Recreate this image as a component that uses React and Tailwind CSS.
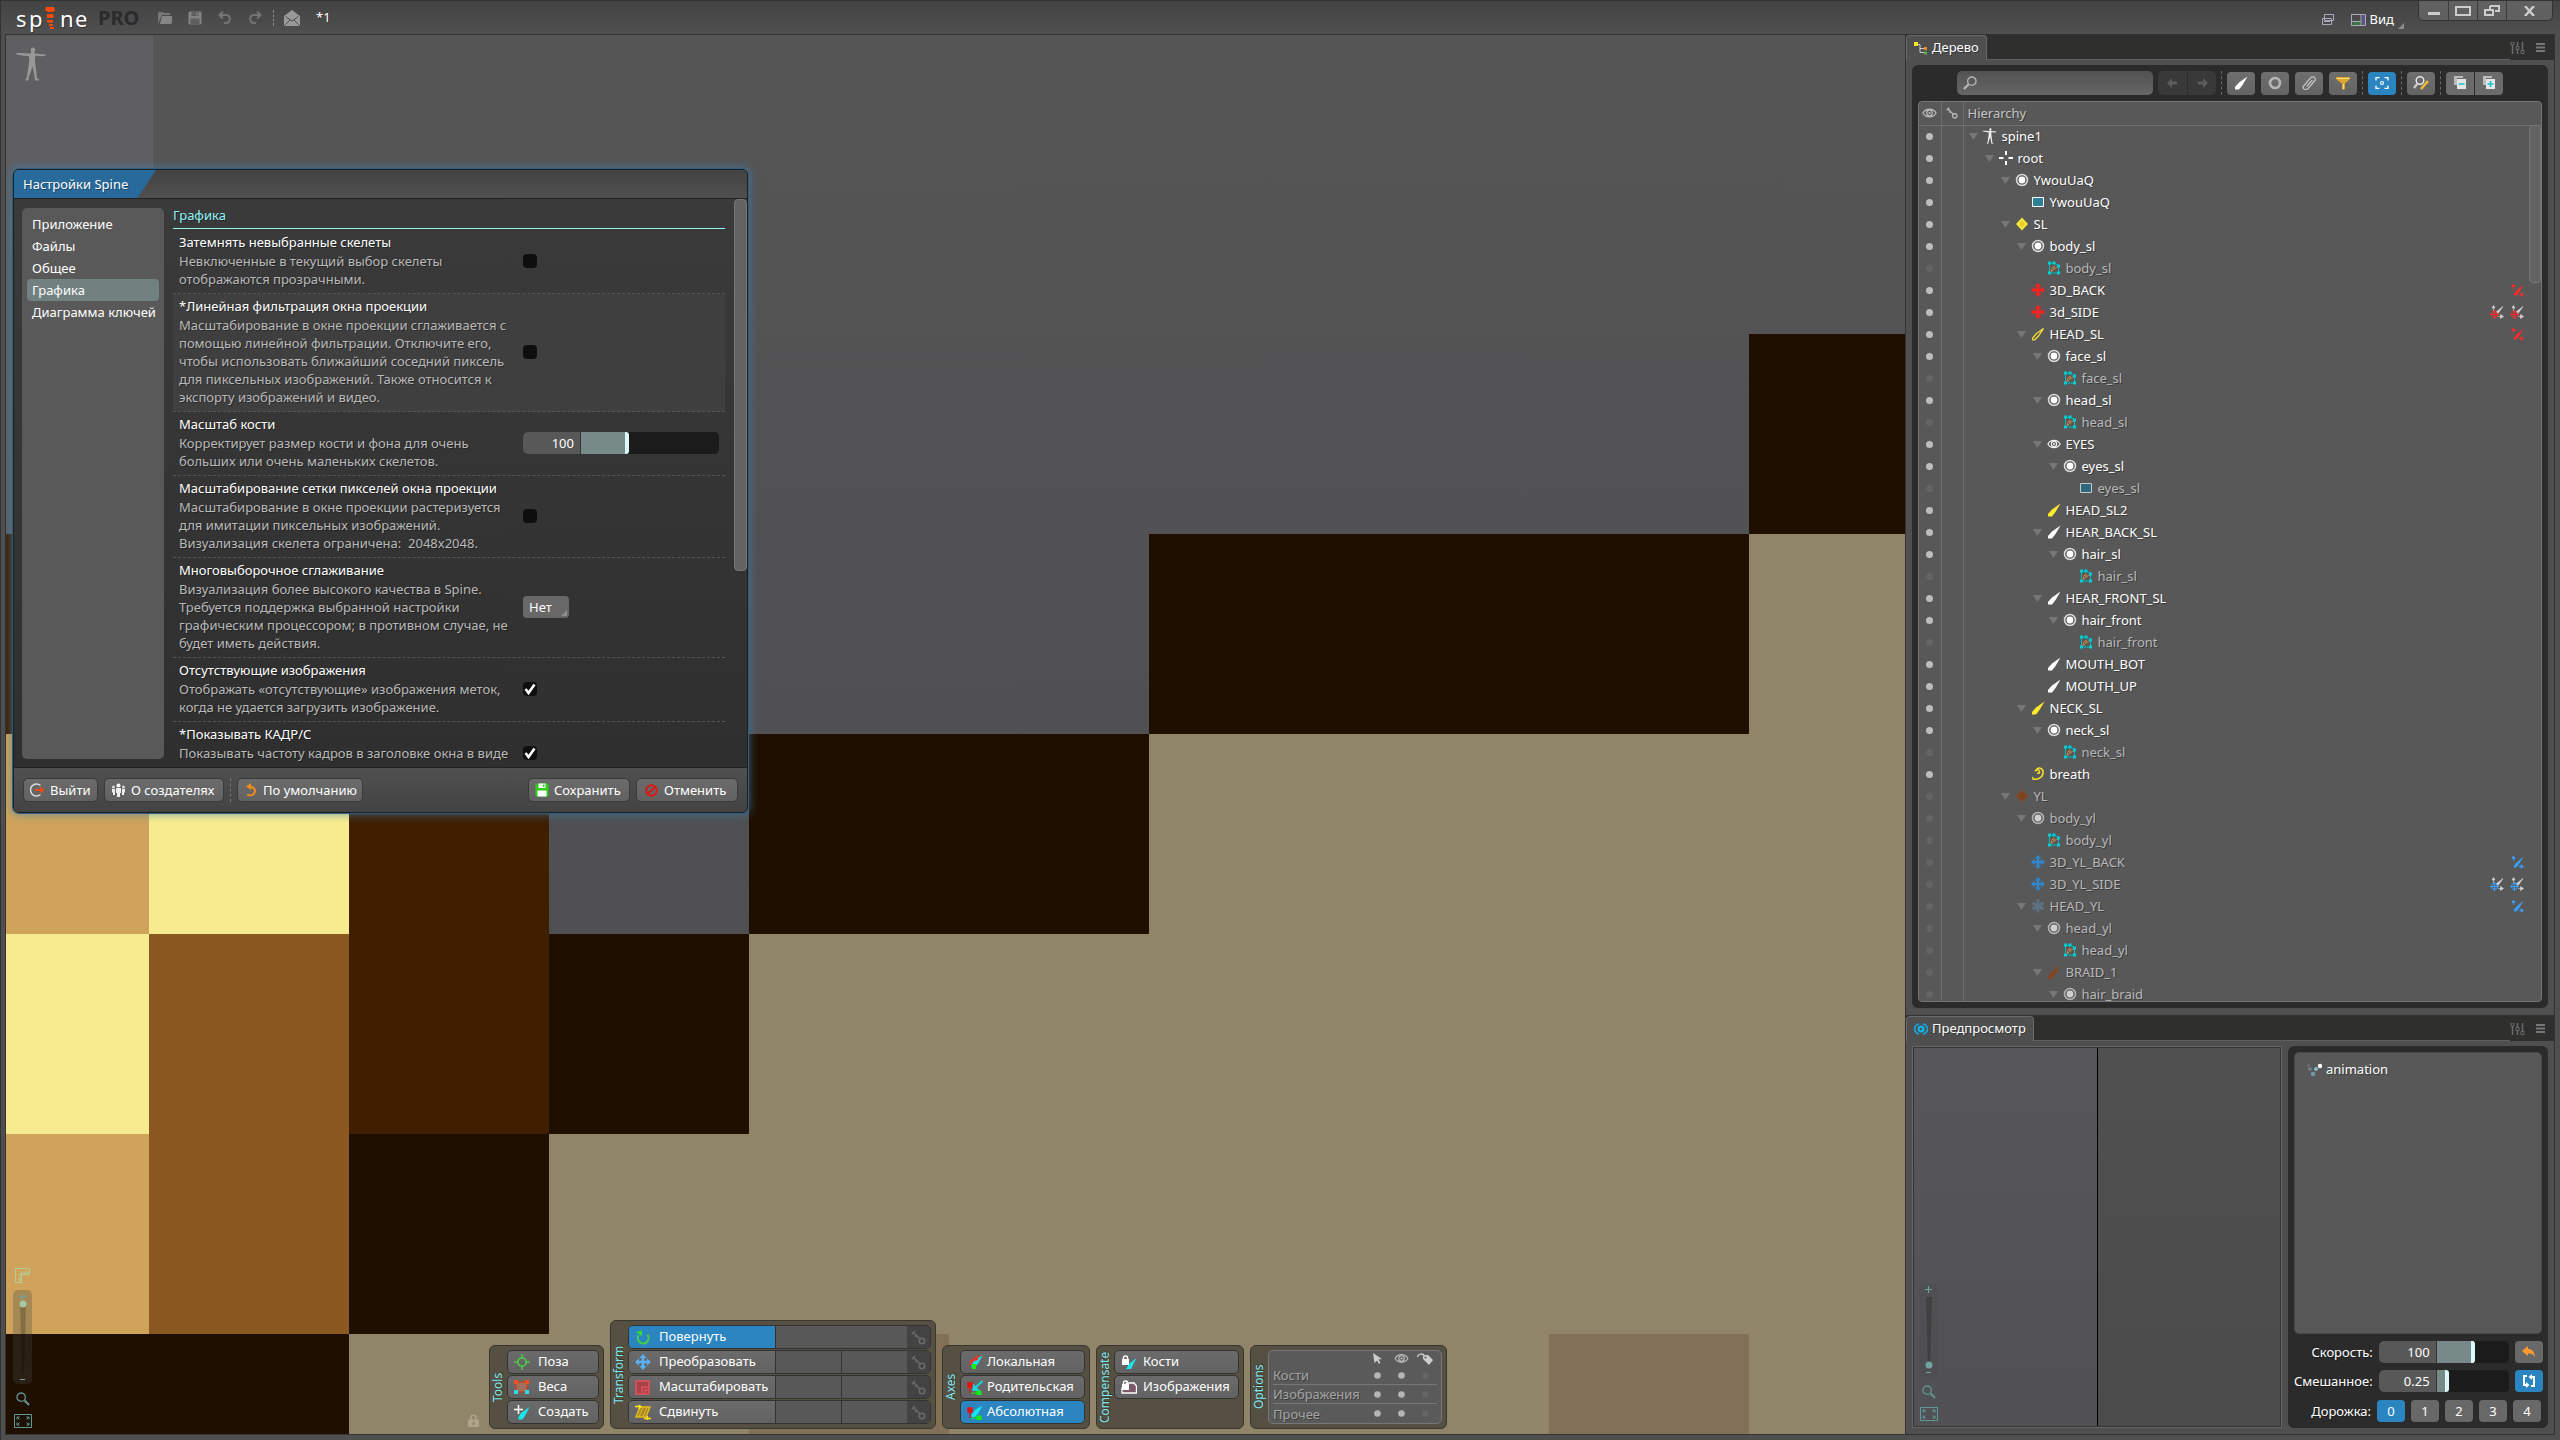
import { useState } from "react";

const GROUP_LABEL = "rotate-180 text-center text-xs leading-[14px] text-[#7fe6ee] [writing-mode:vertical-rl]";
const BTN = "border border-[#3a3a3a] rounded-[5px] bg-linear-to-b from-[#6b6b6b] to-[#626262]";
const TREE_BTN = "flex h-[23px] w-[28px] items-center justify-center rounded-[4px] bg-linear-to-b from-[#6f6f6f] to-[#636363]";

const ROWS = [
  { name: "spine1", depth: 0, icon: "skeleton", open: true },
  { name: "root", depth: 1, icon: "root", open: true },
  { name: "YwouUaQ", depth: 2, icon: "slot", open: true },
  { name: "YwouUaQ", depth: 3, icon: "region" },
  { name: "SL", depth: 2, icon: "diamond", color: "#f9e733", open: true },
  { name: "body_sl", depth: 3, icon: "slot", open: true },
  { name: "body_sl", depth: 4, icon: "mesh", dim: true },
  { name: "3D_BACK", depth: 3, icon: "move", color: "#ff1f1f", links: ["#ff2a2a"] },
  { name: "3d_SIDE", depth: 3, icon: "move", color: "#ff1f1f", targets: ["#ff2a2a", "#ff2a2a"] },
  { name: "HEAD_SL", depth: 3, icon: "boneOutline", color: "#f9e733", open: true, links: ["#ff2a2a"] },
  { name: "face_sl", depth: 4, icon: "slot", open: true },
  { name: "face_sl", depth: 5, icon: "mesh", dim: true },
  { name: "head_sl", depth: 4, icon: "slot", open: true },
  { name: "head_sl", depth: 5, icon: "mesh", dim: true },
  { name: "EYES", depth: 4, icon: "eye", open: true },
  { name: "eyes_sl", depth: 5, icon: "slot", open: true },
  { name: "eyes_sl", depth: 6, icon: "region", dim: true },
  { name: "HEAD_SL2", depth: 4, icon: "bone", color: "#ffeb2e" },
  { name: "HEAR_BACK_SL", depth: 4, icon: "bone", color: "#ffffff", open: true },
  { name: "hair_sl", depth: 5, icon: "slot", open: true },
  { name: "hair_sl", depth: 6, icon: "mesh", dim: true },
  { name: "HEAR_FRONT_SL", depth: 4, icon: "bone", color: "#ffffff", open: true },
  { name: "hair_front", depth: 5, icon: "slot", open: true },
  { name: "hair_front", depth: 6, icon: "mesh", dim: true },
  { name: "MOUTH_BOT", depth: 4, icon: "bone", color: "#ffffff" },
  { name: "MOUTH_UP", depth: 4, icon: "bone", color: "#ffffff" },
  { name: "NECK_SL", depth: 3, icon: "bone", color: "#ffeb2e", open: true },
  { name: "neck_sl", depth: 4, icon: "slot", open: true },
  { name: "neck_sl", depth: 5, icon: "mesh", dim: true },
  { name: "breath", depth: 3, icon: "spiral", color: "#f5de2c" },
  { name: "YL", depth: 2, icon: "diamond", color: "#854522", open: true, dim: true },
  { name: "body_yl", depth: 3, icon: "slot", open: true, dim: true },
  { name: "body_yl", depth: 4, icon: "mesh", dim: true },
  { name: "3D_YL_BACK", depth: 3, icon: "move", color: "#2f86cc", dim: true, links: ["#3aa0ff"] },
  { name: "3D_YL_SIDE", depth: 3, icon: "move", color: "#2f86cc", dim: true, targets: ["#3aa0ff", "#3aa0ff"] },
  { name: "HEAD_YL", depth: 3, icon: "asterisk", color: "#5d7385", open: true, dim: true, links: ["#3aa0ff"] },
  { name: "head_yl", depth: 4, icon: "slot", open: true, dim: true },
  { name: "head_yl", depth: 5, icon: "mesh", dim: true },
  { name: "BRAID_1", depth: 4, icon: "bone", color: "#854522", open: true, dim: true },
  { name: "hair_braid", depth: 5, icon: "slot", open: true, dim: true },
];

const SETTINGS = [
  {
    id: "dim",
    title: "Затемнять невыбранные скелеты",
    text: "Невключенные в текущий выбор скелеты\nотображаются прозрачными.",
    type: "check",
  },
  {
    id: "linear",
    title: "*Линейная фильтрация окна проекции",
    text: "Масштабирование в окне проекции сглаживается с\nпомощью линейной фильтрации. Отключите его,\nчтобы использовать ближайший соседний пиксель\nдля пиксельных изображений. Также относится к\nэкспорту изображений и видео.",
    type: "check",
    highlight: true,
  },
  {
    id: "bone",
    title: "Масштаб кости",
    text: "Корректирует размер кости и фона для очень\nбольших или очень маленьких скелетов.",
    type: "slider",
  },
  {
    id: "grid",
    title: "Масштабирование сетки пикселей окна проекции",
    text: "Масштабирование в окне проекции растеризуется\nдля имитации пиксельных изображений.\nВизуализация скелета ограничена:  2048x2048.",
    type: "check",
  },
  {
    id: "msaa",
    title: "Многовыборочное сглаживание",
    text: "Визуализация более высокого качества в Spine.\nТребуется поддержка выбранной настройки\nграфическим процессором; в противном случае, не\nбудет иметь действия.",
    type: "select",
  },
  {
    id: "missing",
    title: "Отсутствующие изображения",
    text: "Отображать «отсутствующие» изображения меток,\nкогда не удается загрузить изображение.",
    type: "check",
    checked: true,
  },
  {
    id: "fps",
    title: "*Показывать КАДР/С",
    text: "Показывать частоту кадров в заголовке окна в виде",
    type: "check",
    checked: true,
    tall: true,
  },
];

function Svg({ w = 14, h = 14, box, className = "", children }) {
  return (
    <svg width={w} height={h} viewBox={box || `0 0 ${w} ${h}`} fill="none" className={`shrink-0 ${className}`} aria-hidden="true">
      {children}
    </svg>
  );
}

function SkeletonShape({ w, h, color }) {
  return (
    <Svg w={w} h={h} box="0 0 30 34">
      <path
        fill={color}
        d="M17 0.500c1.600 0 2.400 1.200 2.200 2.600-.1 1-.5 1.700-.9 2.200l.2 1.200 4.500.6 6.500.5v1.200l-5 .5-5-.7-.6 3.400.3 4 .9 6.500.7 7 .3 2 2 1v1h-4l-.5-3-1.200-7-1-4-1.500 5-1.800 5-.5 2.500-.3 1.500-3-.1.400-1.300 1-1 .9-6 1-6.500.8-5-.6-4.600-5-.3L1 7.500 0 6l5 .1 8 .4 2-.3.300-1C14.700 4.500 14.600 3.600 14.700 2.600 15 1.400 15.800.5 17 .5z"
      />
    </Svg>
  );
}

function Bone({ color, outline, size = 14 }) {
  return (
    <Svg w={size} h={size} box="0 0 14 14">
      {outline ? (
        <path d="M12.500 1.500L5 7 1.700 11v2h2L7.500 9z" stroke={color} strokeWidth="1.200" />
      ) : (
        <path d="M13.500.5L5 6.500 1 11v2.500h4L8.500 9z" fill={color} />
      )}
    </Svg>
  );
}

function Eye({ color = "#ddd", w = 16, h = 12 }) {
  return (
    <Svg w={w} h={h} box="0 0 16 12">
      <path d="M1 6c3-5.500 11-5.500 14 0-3 5.500-11 5.500-14 0z" stroke={color} strokeWidth="1.300" />
      <circle cx="8" cy="6" r="3" stroke={color} strokeWidth="1.300" />
      <circle cx="8" cy="6" r="1.200" fill={color} />
    </Svg>
  );
}

function Move({ color, size = 14 }) {
  return (
    <Svg w={size} h={size} box="0 0 14 14">
      <path
        fill={color}
        d="M7 0l3.200 3.500H8.200v2.300h2.300V3.800L14 7l-3.500 3.200V8.200H8.200v2.300h2L7 14l-3.200-3.500h2V8.200H3.500v2L0 7l3.500-3.200v2h2.300V3.500h-2z"
      />
    </Svg>
  );
}

function Key({ color = "#6a6a6a", size = 15 }) {
  return (
    <Svg w={size} h={size} box="0 0 15 15">
      <circle cx="11" cy="11" r="2.700" stroke={color} strokeWidth="1.600" />
      <path d="M9 9L2.500 2.500M2.500 2.500L.8 4.200M4 1L2.500 2.500M5.500 5.500L4 7" stroke={color} strokeWidth="1.600" />
    </Svg>
  );
}

function Magnifier({ color, size = 15, flip }) {
  return (
    <Svg w={size} h={size} box="0 0 15 15" className={flip ? "-scale-x-100" : ""}>
      <circle cx="5.500" cy="5.500" r="4.500" stroke={color} strokeWidth="1.500" />
      <path d="M9 9l5 5" stroke={color} strokeWidth="2.400" />
    </Svg>
  );
}

function FitIcon({ w, h, color }) {
  return (
    <Svg w={w} h={h} box="0 0 18 14">
      <path d="M.5.500h17v13H.5z" stroke={color} />
      <path d="M3 5.500V3h2.500M3 3l2.500 2.500M12.500 3H15v2.500M15 3l-2.500 2.500M3 8.500V11h2.500M3 11l2.500-2.500M15 8.500V11h-2.500M15 11l-2.500-2.500" stroke={color} />
    </Svg>
  );
}

function Save({ color, hole = "#fff", size = 14 }) {
  return (
    <Svg w={size} h={size} box="0 0 14 14">
      <path d="M0.500 1.500l1-1h11l1 1v11l-1 1h-11l-1-1z" fill={color} />
      <path d="M3.500.500h7v4.500h-7zM2.500 7.500h9v6h-9z" fill={hole} />
      <path d="M8 1.500h1.500V4H8z" fill={color} />
    </Svg>
  );
}

function NodeIcon({ row }) {
  const c = row.color;
  switch (row.icon) {
    case "skeleton":
      return <SkeletonShape w={15} h={16} color="#f0f0f0" />;
    case "root":
      return (
        <Svg>
          <path d="M7 0v4M7 10v4M0 7h4.500M9.500 7H14" stroke="#fff" strokeWidth="2" />
        </Svg>
      );
    case "slot":
      return (
        <Svg>
          <circle cx="7" cy="7" r="5.500" stroke={row.dim ? "#b5b5b5" : "#dcdcdc"} strokeWidth="1.500" />
          <circle cx="7" cy="7" r="3.400" fill={row.dim ? "#cfcfcf" : "#fff"} />
        </Svg>
      );
    case "region":
      return (
        <Svg>
          <path d="M1.500 2.500h11v9h-11z" fill={row.dim ? "#2a6a7c" : "#2b7f96"} stroke={row.dim ? "#c5c5c5" : "#fff"} />
        </Svg>
      );
    case "diamond":
      return (
        <Svg>
          <path d="M7 .5L13 7l-6 6.500L1 7z" fill={c} />
          <path d="M7 3l3.500 4L7 11 3.500 7z" fill="#000" fillOpacity=".08" />
        </Svg>
      );
    case "mesh":
      return (
        <Svg>
          <path d="M2.500 12V2.500L7 2l4.500 2.500V12z" stroke="#00b8bd" />
          <path d="M1 .500h3v3H1zM5.500.500h3v3h-3zM10 3.500h3v3h-3zM1 10.500h3v3H1zM10 10.500h3v3h-3z" fill="#00cdd2" />
          <path d="M4.500 10.500V7.500L7 5v3l3-2M4.500 10.500L7 8" stroke="#d9823b" />
        </Svg>
      );
    case "move":
      return <Move color={c} />;
    case "boneOutline":
      return <Bone color={c} outline />;
    case "bone":
      return <Bone color={c} />;
    case "eye":
      return <Eye w={14} h={12} color="#f0f0f0" />;
    case "spiral":
      return (
        <Svg>
          <path d="M6.500 5.500c.5 1.500 2.500.8 2-1C8 2 4.500 2 4.500 4.500M5.500 2.500C8-.5 13 1.500 12 6.500c-.7 4-5 6.500-10.500 5.500 1 0 .5-1.500-.5-1.500" stroke={c} strokeWidth="1.600" />
        </Svg>
      );
    default:
      return (
        <Svg>
          <path d="M7 .500v13M1.500 4l11 6M1.500 10l11-6" stroke={c} strokeWidth="2.600" />
        </Svg>
      );
  }
}

function LinkIcon({ color }) {
  return (
    <Svg w={13} h={14}>
      <path d="M12.500 1.500L7.500 10l-3 3-2-1.500L5 8z" fill={color} />
      <path d="M2.500 6V2M.8 3.500L2.500 1l1.700 2.500zM8 11.500h3M10 9.800l2.500 1.700-2.500 1.700z" fill={color} stroke={color} strokeWidth=".8" />
    </Svg>
  );
}

function TargetIcon({ color }) {
  return (
    <Svg w={14} h={15}>
      <path d="M13 1.500L8 8.500 6 7zM3.500 6V2.500M2 3l1.500-2.500L5 3zM8 11.500h3.500M10.500 9.500l3 2-3 2z" fill="#d5d5d5" stroke="#d5d5d5" strokeWidth=".6" />
      <circle cx="4.500" cy="9.500" r="3" stroke={color} />
      <path d="M4.500 5v9M0 9.500h9" stroke={color} />
    </Svg>
  );
}

function Corner({ className = "" }) {
  return (
    <Svg w={6} h={6} className={className}>
      <path d="M6 0v6H0z" fill="#8c8c8c" />
    </Svg>
  );
}

function TitleBar() {
  return (
    <header className="flex h-[33px] shrink-0 items-start bg-linear-to-b from-[#434343] to-[#505050] pr-[7px] pl-[15px]">
      <div className="flex h-full items-center" aria-label="Spine PRO">
        <div className="flex w-[82px] items-center text-[22px] leading-6 text-white">
          <span className="w-[13px]">s</span>
          <span className="w-[16px]">p</span>
          <Svg w={10} h={22}>
            <path fill="#f94a0c" d="M1 0h8l1 4-3 1H3L0 3zM2 7h6l1 3-2 1H2zM2 13h6v2l-3 1-3-1zM4 17h4v2H4zM5 20h4v2H5z" />
          </Svg>
          <span className="ml-[5px] w-[15px]">n</span>
          <span>e</span>
        </div>
        <span className="w-[44px] text-xl leading-6 font-bold text-[#2b2b2b] [text-shadow:none]">PRO</span>
      </div>
      <div className="flex h-full items-center gap-4 pl-4">
        <button type="button" aria-label="Открыть">
          <Svg w={14} h={12}>
            <path d="M0 12V1l1-1h4l1 1h6v2H4z" fill="#777" />
            <path d="M4 4h10v6l-1 2H2z" fill="#858585" />
          </Svg>
        </button>
        <button type="button" aria-label="Сохранить проект">
          <Save color="#838383" hole="#5f5f5f" />
        </button>
        <button type="button" aria-label="Отменить действие">
          <Svg>
            <path d="M1 4h7c5 0 5 8 0 8H6M5 .500L1.500 4 5 7.500" stroke="#757575" strokeWidth="2" />
          </Svg>
        </button>
        <button type="button" aria-label="Повторить действие" className="-scale-x-100">
          <Svg>
            <path d="M1 4h7c5 0 5 8 0 8H6M5 .500L1.500 4 5 7.500" stroke="#757575" strokeWidth="2" />
          </Svg>
        </button>
      </div>
      <div className="flex h-full items-center gap-[10px] pl-[11px]">
        <span className="h-4 border-l border-dashed border-[#858585]" />
        <button type="button" aria-label="Сообщения">
          <Svg w={16} h={16}>
            <path d="M0 6l8-6 8 6v10H0z" fill="#999" />
            <path d="M1.500 6.500L8 11l6.500-4.500M.5 15.500L6 10M15.500 15.500L10 10" stroke="#4a4a4a" />
          </Svg>
        </button>
        <span className="ml-[6px] text-[13px]">*1</span>
      </div>
      <div className="flex-1" />
      <div className="flex h-full items-center gap-4 pt-1 pr-[14px]">
        <button type="button" aria-label="Окна">
          <Svg w={14} h={12}>
            <path d="M3.500.500h9v6h-9zM1.500 4.500h9v6h-9zM3 7.500h6" stroke="#aaaabb" />
          </Svg>
        </button>
        <button type="button" className="flex items-center gap-1 text-[13px]">
          <Svg w={15} h={12}>
            <path d="M.5.500h14v11H.5z" stroke="#aaaabb" />
            <path d="M10 1v10M1 7.500h9" stroke="#aaaabb" />
            <path d="M2 8h7v3H2z" fill="#3c7a3c" />
            <path d="M11 1h3v10h-3z" fill="#57578a" />
          </Svg>
          Вид
          <Corner className="mt-3" />
        </button>
      </div>
      <div className="flex h-[20px] overflow-hidden rounded-b-[5px] border border-t-0 border-[#333] bg-[#606060]">
        <button type="button" aria-label="Свернуть" className="flex w-[29px] items-center justify-center">
          <Svg w={12} h={10}><path d="M0 6h12v3H0z" fill="#ccc" /></Svg>
        </button>
        <button type="button" aria-label="Развернуть" className="flex w-[29px] items-center justify-center border-l border-[#3c3c3c]">
          <Svg w={16} h={10}><path d="M1 1h14v8H1z" stroke="#ccc" strokeWidth="2" /></Svg>
        </button>
        <button type="button" aria-label="Оконный режим" className="flex w-[29px] items-center justify-center border-l border-[#3c3c3c]">
          <Svg w={16} h={11}>
            <path d="M6 1h9v5h-4M6 1v3M1 5h8v5H1z" stroke="#ccc" strokeWidth="2" />
          </Svg>
        </button>
        <button type="button" aria-label="Закрыть" className="flex w-[46px] items-center justify-center border-l border-[#3c3c3c]">
          <Svg w={11} h={10}><path d="M1 0l9 10M10 0L1 10" stroke="#ccc" strokeWidth="2.400" /></Svg>
        </button>
      </div>
    </header>
  );
}

// Enlarged sprite under the camera, every source pixel is 200 units wide
function Sprite() {
  return (
    <svg className="absolute inset-0 h-full w-full" viewBox="6 35 1899 1399" preserveAspectRatio="xMinYMin slice" shapeRendering="crispEdges" aria-hidden="true">
      <defs>
        <linearGradient id="sky" x1="0" y1="0" x2="0" y2="1">
          <stop offset="0" stopColor="#565656" />
          <stop offset=".4" stopColor="#515154" />
          <stop offset=".7" stopColor="#4f4f52" />
          <stop offset="1" stopColor="#4c4c4e" />
        </linearGradient>
      </defs>
      <path fill="url(#sky)" d="M6 35h1899v1399H6z" />
      <path fill="#5f5f62" d="M6 35h147v500H6z" />
      <path fill="#908469" d="M1749 534h156v900H549v-300h200V934h400V734h600zM349 1334h200v100H349z" />
      <path fill="#1f0f00" d="M1749 334h156v200h-156zM1149 534h600v200h-600zM749 734h400v200H749zM549 934h200v200H549zM349 1134h200v200H349zM6 1334h343v100H6z" />
      <path fill="#3f1f00" d="M6 534h343v200H6zM349 734h200v400H349z" />
      <path fill="#cfa45a" d="M6 734h143v200H6zM6 1134h143v200H6z" />
      <path fill="#f7eb8f" d="M149 734h200v200H149zM6 934h143v200H6z" />
      <path fill="#8a5820" d="M149 934h200v400H149z" />
      <path fill="#837059" d="M749 1334h200v100H749zM1549 1334h200v100h-200z" />
    </svg>
  );
}

function ValueSlider({ label, value, range, wide }) {
  const [pos, setPos] = useState(range);
  return (
    <div className={`flex h-[22px] overflow-hidden rounded-[5px] bg-[#1b1b1b] ${wide ? "w-[196px]" : "w-[130px]"}`}>
      <input
        type="text"
        aria-label={label}
        defaultValue={value}
        className="w-[57px] bg-[#585858] pr-[6px] text-right text-[13px] outline-none"
      />
      <input
        type="range"
        aria-label={`${label}, ползунок`}
        value={pos}
        onChange={(e) => setPos(Number(e.target.value))}
        style={{ backgroundImage: `linear-gradient(to right, #788a88 ${pos}%, #1b1b1b ${pos}%)` }}
        className="h-[22px] min-w-0 flex-1 appearance-none border-l border-[#333] [&::-webkit-slider-thumb]:h-[22px] [&::-webkit-slider-thumb]:w-1 [&::-webkit-slider-thumb]:appearance-none [&::-webkit-slider-thumb]:rounded-r-[3px] [&::-webkit-slider-thumb]:bg-[#dcf8fa]"
      />
    </div>
  );
}

function Check({ id, checked }) {
  return (
    <span className="grid size-[14px] place-items-center">
      <input id={id} type="checkbox" defaultChecked={checked} className="peer col-start-1 row-start-1 size-[14px] appearance-none rounded-[4px] bg-[#0e0e0e]" />
      <Svg w={12} h={12} className="pointer-events-none col-start-1 row-start-1 hidden peer-checked:block">
        <path d="M1.500 6l3 4L10.500 1.500" stroke="#fff" strokeWidth="2.600" />
      </Svg>
    </span>
  );
}

function Setting({ item }) {
  return (
    <div className={`flex items-center border-b border-dashed border-[#555] pt-[3px] pb-[5px] pl-[6px] ${item.highlight ? "bg-[#3f3f3f]" : ""}`}>
      <label htmlFor={item.id} className={`block w-[344px] shrink-0 whitespace-pre ${item.tall ? "pb-[18px]" : ""}`}>
        <span className="mb-px block text-white">{item.title}</span>
        <span className="block text-[#b9b9b9]">{item.text}</span>
      </label>
      {item.type === "check" && <Check id={item.id} checked={item.checked} />}
      {item.type === "slider" && <ValueSlider label={item.title} value="100" range={33} wide />}
      {item.type === "select" && (
        <div className="relative">
          <select id={item.id} className="h-[22px] w-[46px] appearance-none rounded-[4px] bg-[#686868] pl-[6px] outline-none">
            <option>Нет</option>
            <option>2x</option>
            <option>4x</option>
          </select>
          <Corner className="pointer-events-none absolute right-[2px] bottom-[2px]" />
        </div>
      )}
    </div>
  );
}

function SettingsDialog() {
  const [page, setPage] = useState("Графика");
  const pages = ["Приложение", "Файлы", "Общее", "Графика", "Диаграмма ключей"];
  return (
    <section
      role="dialog"
      aria-label="Настройки Spine"
      className="absolute top-[134px] left-[7px] flex h-[644px] w-[735px] flex-col overflow-hidden rounded-[6px] border border-[#1f1f1f] bg-linear-to-b from-[#3b3b3b] to-[#2e2e2e] text-[13px] leading-[18px] shadow-[0_0_0_1px_#2f5f80,0_0_8px_2px_rgba(60,130,180,0.6)]"
    >
      <div className="h-[29px] shrink-0 border-b border-[#222] bg-linear-to-b from-[#424242] to-[#505050]">
        <h2 className="flex h-[28px] w-[142px] items-center bg-[#286a9b] pl-[9px] [clip-path:polygon(0_0,100%_0,87%_100%,0_100%)]">Настройки Spine</h2>
      </div>
      <div className="flex min-h-0 flex-1">
        <nav className="mt-[9px] mb-2 ml-2 w-[142px] shrink-0 rounded-[5px] bg-[#595959] px-[5px] pt-[5px]">
          {pages.map((name) => (
            <button
              key={name}
              type="button"
              onClick={() => setPage(name)}
              className={`block h-[22px] w-full rounded-[4px] pl-[5px] text-left whitespace-nowrap ${page === name ? "bg-[#71817f]" : ""}`}
            >
              {name}
            </button>
          ))}
        </nav>
        <div className="ml-[9px] min-w-0 flex-1 overflow-hidden pt-[7px]">
          <h3 className="mb-px h-[23px] border-b border-[#8ff5f5] text-[#8ff5f5]">Графика</h3>
          {SETTINGS.map((item) => (
            <Setting key={item.id} item={item} />
          ))}
        </div>
        <div className="ml-[9px] w-[13px] shrink-0">
          <div className="h-[372px] rounded-[4px] border border-[#777] bg-[#636363]" />
        </div>
      </div>
      <div className="flex h-[45px] shrink-0 items-center gap-[6px] border-t border-[#222] bg-linear-to-b from-[#505050] to-[#434343] px-[9px]">
        <button type="button" className={`flex h-6 w-[75px] items-center gap-[5px] pl-[6px] whitespace-nowrap ${BTN}`}>
          <Svg w={15}>
            <path d="M10.500 2.500a6 6 0 1 0 0 9" stroke="#ddd" strokeWidth="1.500" />
            <path d="M5 6h5V3.500L14.500 7 10 10.500V8H5z" fill="#f04a1a" />
          </Svg>
          Выйти
        </button>
        <button type="button" className={`flex h-6 w-[120px] items-center gap-[5px] pl-[6px] whitespace-nowrap ${BTN}`}>
          <Svg w={15}>
            <circle cx="7.500" cy="2.500" r="2" fill="#fff" />
            <circle cx="2.500" cy="4" r="1.500" fill="#ddd" />
            <circle cx="12.500" cy="4" r="1.500" fill="#ddd" />
            <path d="M5 5h5v5H9v4H6v-4H5zM1 6h3v6H2V9.500H1zM11 6h3v3.500h-1V12h-2z" fill="#eee" />
          </Svg>
          О создателях
        </button>
        <span className="h-[24px] border-l border-dashed border-[#777]" />
        <button type="button" className={`flex h-6 w-[126px] items-center gap-[5px] pl-[6px] whitespace-nowrap ${BTN}`}>
          <Svg w={14}>
            <path d="M3 11.500c5 3 10-2.500 7-6C9 4 7 3.500 5 3.500" stroke="#f08a1c" strokeWidth="2" />
            <path d="M7 0v7L2 3.500z" fill="#f08a1c" />
          </Svg>
          По умолчанию
        </button>
        <div className="flex-1" />
        <button type="button" className={`flex h-6 w-[102px] items-center gap-[5px] pl-[6px] whitespace-nowrap ${BTN}`}>
          <Save color="#2fcb1a" size={14} />
          Сохранить
        </button>
        <button type="button" className={`flex h-6 w-[102px] items-center gap-[6px] pl-2 whitespace-nowrap ${BTN}`}>
          <Svg w={13} h={13}>
            <circle cx="6.500" cy="6.500" r="5.300" stroke="#d61a1a" strokeWidth="2" />
            <path d="M3 10l7-7" stroke="#d61a1a" strokeWidth="2" />
          </Svg>
          Отменить
        </button>
      </div>
    </section>
  );
}

function ZoomColumn({ knob, knobColor }) {
  const color = "#6fa3a0";
  return (
    <div className="flex flex-col items-center gap-2">
      <div className="flex h-[94px] w-[19px] flex-col items-center rounded-[5px] bg-[#4a4a4a]/30 pt-[3px]">
        <Svg w={7} h={7}><path d="M3.500 0v7M0 3.500h7" stroke={color} /></Svg>
        <Svg w={8} h={76}>
          <path d="M1 4h6L5 74H3z" fill="#000" fillOpacity=".2" />
          <circle cx="4" cy={knob} r="3.500" fill={knobColor} />
        </Svg>
        <Svg w={7} h={6}><path d="M1 3.500h5" stroke={color} /></Svg>
      </div>
      <button type="button" aria-label="Масштаб"><Magnifier color="#5f8f8c" size={14} /></button>
      <button type="button" aria-label="Вписать"><FitIcon w={18} h={14} color="#5f9a98" /></button>
    </div>
  );
}

function ToolGroup({ label, children }) {
  return (
    <div className="flex min-h-[84px] gap-[2px] rounded-[6px] border border-[#38362f] bg-[#555042] py-1 pr-1 pl-px">
      <span className={GROUP_LABEL}>{label}</span>
      <div className="flex flex-col gap-px">{children}</div>
    </div>
  );
}

function ToolButton({ icon, children, active, width, gap = "gap-2" }) {
  return (
    <button
      type="button"
      className={`flex h-6 items-center rounded-[5px] border border-[#333] pl-[6px] text-[13px] whitespace-nowrap ${gap} ${width} ${active ? "bg-[#2a85c0]" : "bg-linear-to-b from-[#6b6b6b] to-[#626262]"}`}
    >
      {icon}
      {children}
    </button>
  );
}

function TransformRow({ name, icon, active, single }) {
  return (
    <div className="flex h-6 overflow-hidden rounded-[5px] border border-[#333] bg-[#585858]">
      <button type="button" className={`flex w-[146px] items-center gap-2 pl-[6px] text-[13px] ${active ? "bg-[#2a85c0]" : "bg-linear-to-b from-[#6b6b6b] to-[#626262]"}`}>
        {icon}
        {name}
      </button>
      <input aria-label={`${name} X`} className={`border-l border-[#333] outline-none ${single ? "w-[132px]" : "w-[66px]"}`} />
      {!single && <input aria-label={`${name} Y`} className="w-[66px] border-l border-[#333] outline-none" />}
      <button type="button" aria-label={`Ключ: ${name}`} className="flex w-[23px] items-center justify-center bg-[#434343]">
        <Key />
      </button>
    </div>
  );
}

function AxisIcon({ bone, local }) {
  return (
    <Svg w={16} h={15}>
      {bone ? <path d="M15.500.500L8 5 4.500 9.500V12H8l3-3.500z" fill="#17e6ec" /> : <path d="M15.500 1L8 8M6.500 5.500V10H11z" stroke="#17d5dc" strokeWidth="2" fill="#17d5dc" />}
      {local ? (
        <path d="M12 1L6 5l-3 5M3 6l8-2" stroke="#e8352d" strokeWidth="2.200" />
      ) : (
        <path d="M3 4v9M1 3h4v4H1z" stroke="#e81010" strokeWidth="1.500" fill="#e81010" />
      )}
      {local ? <path d="M5 9h4v5H5z" fill="#12ee12" /> : <path d="M4 13h7M10 11h4v4h-4z" stroke="#12ee12" fill="#12ee12" />}
    </Svg>
  );
}

function Toolbars() {
  const filters = ["Кости", "Изображения", "Прочее"];
  return (
    <div className="absolute inset-x-0 bottom-[5px] flex items-end justify-center gap-[6px] pl-1">
      <button type="button" aria-label="Закрепить" className="mr-1 mb-[2px]">
        <Svg w={11} h={13}>
          <path d="M3 6V2.500l1-1h3l1 1V6" stroke="#b0a58c" strokeWidth="1.500" />
          <path d="M0 5.500h11V13H0zM4.500 8v3h2V8z" fill="#b0a58c" fillRule="evenodd" />
        </Svg>
      </button>
      <ToolGroup label="Tools">
        <ToolButton width="w-[92px]" icon={<Svg w={16} h={16}><circle cx="8" cy="8" r="4.200" stroke="#4cc94a" strokeWidth="1.700" /><path d="M8 0v4M8 12v4M0 8h4M12 8h4" stroke="#4cc94a" strokeWidth="1.500" /></Svg>}>Поза</ToolButton>
        <ToolButton width="w-[92px]" icon={<Svg w={16} h={14}><path d="M2 2h11v10H2z" fill="#a0705f" stroke="#bb4a2a" strokeWidth="1.500" /><path d="M0 0h4v4H0zM11 0h4v4h-4z" fill="#f5501d" /><path d="M0 10h4v4H0zM11 10h4v4h-4z" fill="#30d8e8" /></Svg>}>Веса</ToolButton>
        <ToolButton width="w-[92px]" icon={<Svg w={16} h={15}><path d="M4.500 0v9M0 4.500h9" stroke="#fff" strokeWidth="1.500" /><path d="M15.500 2L7 8l-2.500 4v2.500h4l3-4.500z" fill="#17e6ec" /></Svg>}>Создать</ToolButton>
      </ToolGroup>
      <ToolGroup label="Transform">
        <TransformRow name="Повернуть" active single icon={<Svg w={16} h={15}><path d="M3.500 5c-2 5 1 8.500 4.500 8.500 5 0 7-5 4.500-9" stroke="#45c94a" strokeWidth="2" /><path d="M1 2l6-1.500V6z" fill="#35d93c" /></Svg>} />
        <TransformRow name="Преобразовать" icon={<Move color="#5aaef2" size={16} />} />
        <TransformRow name="Масштабировать" icon={<Svg w={16} h={15}><path d="M1 1h13v13H1zM7 7h7v7H7zM10 10h4v4h-4z" stroke="#e0525a" strokeWidth="1.500" fill="#a84248" /></Svg>} />
        <TransformRow name="Сдвинуть" icon={<Svg w={16} h={15}><path d="M5 2h10l-4 10H1z" fill="#a8882a" stroke="#e6bb1e" strokeWidth="1.400" /><path d="M8 2L4 12M12 2L8 12" stroke="#e6bb1e" /><path d="M0 1.500h6M3.500 0L6 1.500 3.500 3.500M9 13.500h7M12.500 11v4" stroke="#ffe21e" strokeWidth="1.400" /></Svg>} />
      </ToolGroup>
      <ToolGroup label="Axes">
        <ToolButton width="w-[125px]" gap="gap-1" icon={<AxisIcon bone local />}>Локальная</ToolButton>
        <ToolButton width="w-[125px]" gap="gap-1" icon={<AxisIcon />}>Родительская</ToolButton>
        <ToolButton width="w-[125px]" gap="gap-1" active icon={<AxisIcon bone />}>Абсолютная</ToolButton>
      </ToolGroup>
      <ToolGroup label="Compensate">
        <ToolButton width="w-[125px]" gap="gap-[6px]" icon={<Svg w={16} h={15}><path d="M15.500 3L9 8l-4 6h5z" fill="#17e6ec" /><path d="M2.500 4V2.500c0-2 4-2 4 0V4" stroke="#fff" strokeWidth="1.400" /><path d="M1 4h7v6H1z" fill="#fff" /></Svg>}>Кости</ToolButton>
        <ToolButton width="w-[125px]" gap="gap-[6px]" icon={<Svg w={16} h={14}><path d="M6 3h7l2.500 3v7H1V8z" fill="#7b5b68" stroke="#fff" strokeWidth="1.300" /><path d="M2.500 4V2.500c0-2 4-2 4 0V4" stroke="#fff" strokeWidth="1.400" /><path d="M1 4h7v6H1z" fill="#fff" /></Svg>}>Изображения</ToolButton>
      </ToolGroup>
      <ToolGroup label="Options">
        <table className="h-[74px] w-[174px] table-fixed border-separate border-spacing-0 rounded-[5px] border border-[#777] bg-[#5a5a5a] px-1 text-[13px] leading-[18px] text-[#a5a5a5]">
          <thead>
            <tr className="h-[15px]">
              <th className="w-[92px] p-0" aria-label="Тип" />
              <th className="p-0"><span className="flex justify-center"><Svg w={9} h={11}><path d="M0 0l9 6-3.500.5 2 3.500-1.500 1-2-3.500L1.500 10z" fill="#ccc" /></Svg></span></th>
              <th className="p-0"><span className="flex justify-center"><Eye w={15} h={11} color="#bbb" /></span></th>
              <th className="p-0"><span className="flex justify-center"><Svg w={17} h={12}><path d="M0 4c2-3.500 5-3.500 7-2" stroke="#ccc" strokeWidth="1.500" /><path d="M6 2h5l5 5-4 5-6-6z" fill="#ccc" /><circle cx="8.500" cy="4.500" r="1" fill="#555" /></Svg></span></th>
            </tr>
          </thead>
          <tbody>
            {filters.map((name, i) => (
              <tr key={name}>
                {[name, "#b5b5b5", "#b5b5b5", "#656565"].map((value, col) => (
                  <td key={col} className={`h-[19px] p-0 ${i < 2 ? "border-b border-[#777]" : ""}`}>
                    {col === 0 ? value : <span className="flex justify-center"><Svg w={7} h={7}><circle cx="3.500" cy="3.500" r="3.300" fill={value} /></Svg></span>}
                  </td>
                ))}
              </tr>
            ))}
          </tbody>
        </table>
      </ToolGroup>
    </div>
  );
}

function Viewport() {
  return (
    <main className="relative min-w-0 flex-1 overflow-hidden border-r border-b border-[#333]">
      <Sprite />
      <div className="absolute top-3 left-[10px]">
        <SkeletonShape w={30} h={34} color="#989898" />
      </div>
      <SettingsDialog />
      <div className="absolute bottom-[6px] left-[7px] flex flex-col items-center gap-[7px]">
        <Svg w={15} h={15}>
          <path d="M.5.500h14v6h-8v8h-6zM3 6.500h3.500V3M9 6V4M11 6V3M13 6V4M6 9H4M6 11H3M6 13H4" stroke="#b5cc9a" />
        </Svg>
        <ZoomColumn knob={4} knobColor="#a5c8a8" />
      </div>
      <Toolbars />
    </main>
  );
}

function PanelTabs({ title, icon }) {
  return (
    <div className="flex h-[25px] shrink-0 items-center bg-[#2f2f2e] pr-[9px]">
      <h2 className="flex h-full items-center gap-1 rounded-t-[4px] border border-b-0 border-[#6a6a6a] bg-[#4f4f4f] px-[7px] text-[13px]">
        {icon}
        {title}
      </h2>
      <div className="h-full flex-1 border-b border-[#606060]" />
      <div className="flex items-center gap-[11px]">
        <button type="button" aria-label="Настройки панели">
          <Svg w={15} h={12}>
            <path d="M2.500 3v9M7.500 0v4M7.500 8v4M12.500 0v8" stroke="#6a6a6a" strokeWidth="1.500" />
            <path d="M1 0h3v3H1zM6 4.500h3v3H6zM11 8.500h3v3h-3z" stroke="#6a6a6a" />
          </Svg>
        </button>
        <button type="button" aria-label="Меню панели">
          <Svg w={9} h={9}><path d="M0 1h9M0 4.500h9M0 8h9" stroke="#777" strokeWidth="2" /></Svg>
        </button>
      </div>
    </div>
  );
}

function DashSep() {
  return <span className="h-6 border-l border-dashed border-[#666]" />;
}

function TreeToolbar() {
  return (
    <div className="flex h-6 shrink-0 items-center gap-[5px] px-[39px]">
      <label className="flex h-6 min-w-0 flex-1 items-center gap-1 rounded-[5px] bg-linear-to-b from-[#525252] to-[#666] px-[6px]">
        <Magnifier color="#b5b5b5" size={14} flip />
        <input type="text" aria-label="Поиск" className="min-w-0 flex-1 text-[13px] outline-none" />
      </label>
      <div className="flex h-6 rounded-[5px] bg-[#393939]">
        <button type="button" aria-label="Назад" className="flex w-[29px] items-center justify-center">
          <Svg w={11} h={10}><path d="M0 5l5-5v3.500h5v3H5V10z" fill="#5c5c5c" /></Svg>
        </button>
        <button type="button" aria-label="Вперёд" className="flex w-[29px] items-center justify-center border-l border-[#2d2d2d]">
          <Svg w={11} h={10}><path d="M11 5L6 0v3.500H1v3h5V10z" fill="#5c5c5c" /></Svg>
        </button>
      </div>
      <DashSep />
      <div className="flex gap-[6px]">
        <button type="button" aria-label="Кости" className={TREE_BTN}><Bone color="#fff" /></button>
        <button type="button" aria-label="Слоты" className={TREE_BTN}>
          <Svg><circle cx="7" cy="7" r="5" stroke="#b5b5b5" strokeWidth="2.600" /></Svg>
        </button>
        <button type="button" aria-label="Вложения" className={TREE_BTN}>
          <Svg><path d="M4.500 10.500L10.500 4M2 9.500L8.500 2c1-1.500 4-1.500 4.500 0 .5 1 .5 2-.5 3L6 12.500c-1 1-3 1.500-4 .5s-1-2.500 0-3.500" stroke="#c5c5c5" strokeWidth="1.200" /></Svg>
        </button>
        <button type="button" aria-label="Фильтр" className={TREE_BTN}>
          <Svg><path d="M0 1h14v2L9 7.500V13l-3 1V7.500L0 3z" fill="#dca62c" /><path d="M1 2.500h12M7.500 8v5" stroke="#f8dc7a" /></Svg>
        </button>
      </div>
      <DashSep />
      <button type="button" aria-label="К выделенному" className="flex h-[23px] w-[28px] items-center justify-center rounded-[4px] bg-[#2a85c0]">
        <Svg w={14} h={12}>
          <path d="M1 3.500V.7h3.500M9.500.7H13v2.800M13 8.500v2.800H9.500M4.500 11.300H1V8.500" stroke="#fff" strokeWidth="1.300" />
          <path d="M5.700 4.700h2.600v2.600H5.700z" stroke="#fff" />
        </Svg>
      </button>
      <DashSep />
      <button type="button" aria-label="Найти и заменить" className={TREE_BTN}>
        <Svg w={16}>
          <circle cx="7" cy="4.500" r="3.800" stroke="#e5e5e5" strokeWidth="1.500" />
          <path d="M4.500 7.500L1 12" stroke="#ccc" strokeWidth="2.200" />
          <path d="M15 5l-7 8" stroke="#f2bd33" strokeWidth="2.600" />
        </Svg>
      </button>
      <DashSep />
      <div className="flex">
        <button type="button" aria-label="Свернуть всё" className="flex h-[23px] w-[28px] items-center justify-center rounded-l-[4px] bg-[#6b6b6b]">
          <Svg><path d="M1 0h9v2H4v7H1z" fill="#bbb" /><path d="M4 3h9v10H4z" fill="#e5e5e5" /><path d="M5.500 8h6" stroke="#12c5d0" strokeWidth="1.500" /></Svg>
        </button>
        <button type="button" aria-label="Развернуть всё" className="ml-px flex h-[23px] w-[28px] items-center justify-center rounded-r-[4px] bg-[#6b6b6b]">
          <Svg><path d="M1 0h9v2H4v7H1z" fill="#bbb" /><path d="M4 3h9v10H4z" fill="#e5e5e5" /><path d="M5.500 8h6M8.500 5v6" stroke="#12c5d0" strokeWidth="1.500" /></Svg>
        </button>
      </div>
    </div>
  );
}

function TreePanel() {
  return (
    <section className="flex h-[980px] min-h-0 flex-col">
      <PanelTabs
        title="Дерево"
        icon={
          <Svg w={14} h={13}>
            <path d="M0 0h4v4H0z" fill="#ffe61e" />
            <path d="M4 2.500h2v8h4M6 6.500h4" stroke="#ccc" />
            <path d="M10 5h3v3h-3z" fill="#f08a1c" />
            <path d="M10 9.500h3v3h-3z" fill="#4caf50" />
          </Svg>
        }
      />
      <div className="mx-[6px] mt-[5px] mb-[7px] flex min-h-0 flex-1 flex-col rounded-[6px] bg-[#2b2b2b] p-[6px]">
        <TreeToolbar />
        <div className="relative mt-[6px] min-h-0 flex-1 overflow-hidden rounded-[4px] border border-[#757575] bg-[#585858]">
          <table className="w-full table-fixed border-collapse text-[13px] leading-4">
            <thead>
              <tr className="h-[23px] border-b border-[#707070] text-[#c5c5c5]">
                <th className="w-[22px] border-r border-[#6c6c6c] p-0"><span className="flex justify-center"><Eye color="#bbb" w={15} /></span></th>
                <th className="w-[22px] border-r border-[#6c6c6c] p-0"><span className="flex justify-center"><Key color="#bbb" size={12} /></span></th>
                <th className="p-0 pl-1 text-left font-normal">Hierarchy</th>
              </tr>
            </thead>
            <tbody>
              {ROWS.map((row, i) => (
                <tr key={i} className="h-[22px]">
                  <td className="border-r border-[#6c6c6c] p-0">
                    <span className={`mx-auto block h-[7px] w-[7px] rounded-full ${row.dim ? "bg-[#646464]" : "bg-[#bdbdbd]"}`} />
                  </td>
                  <td className="border-r border-[#6c6c6c] p-0" />
                  <td className="p-0">
                    <div className="flex items-center pr-[17px]" style={{ paddingLeft: 5 + row.depth * 16 }}>
                      <span className="flex w-[14px] shrink-0">
                        {row.open && <Svg w={9} h={7}><path d="M0 0h9L4.500 7z" fill="#777" /></Svg>}
                      </span>
                      <span className="flex w-[14px] shrink-0 justify-center"><NodeIcon row={row} /></span>
                      <span className={`ml-[5px] flex-1 ${row.dim ? "text-[#b9b9b9]" : "text-white"}`}>{row.name}</span>
                      <span className="flex gap-[6px]">
                        {row.links?.map((c, k) => <LinkIcon key={k} color={c} />)}
                        {row.targets?.map((c, k) => <TargetIcon key={k} color={c} />)}
                      </span>
                    </div>
                  </td>
                </tr>
              ))}
            </tbody>
          </table>
          <div className="absolute top-[23px] right-0 h-[158px] w-3 rounded-[4px] border border-[#777] bg-[#636363]" />
        </div>
      </div>
    </section>
  );
}

function PreviewPanel() {
  const [track, setTrack] = useState(0);
  return (
    <section className="flex min-h-0 flex-1 flex-col border-t border-[#333]">
      <PanelTabs
        title="Предпросмотр"
        icon={
          <Svg w={14} h={12}>
            <path d="M5 .800C-1 3-1 9 5 11.200M9 .800c6 2.200 6 8.200 0 10.400" stroke="#12a5dd" strokeWidth="1.800" />
            <circle cx="7" cy="6" r="2.400" stroke="#12b5ee" strokeWidth="2.200" />
          </Svg>
        }
      />
      <div className="flex min-h-0 flex-1 gap-[6px] px-[6px] pt-[5px] pb-[6px]">
        <div className="relative flex flex-1 border border-[#666] outline -outline-offset-2 outline-[#333]">
          <div className="flex-1 border-r border-black bg-linear-to-b from-[#57575a] to-[#515155]" />
          <div className="flex-1 bg-linear-to-b from-[#505051] to-[#4b4b4c]" />
          <div className="absolute bottom-[6px] left-[6px]">
            <ZoomColumn knob={72} knobColor="#6fa3a0" />
          </div>
        </div>
        <div className="flex w-[260px] flex-col rounded-[6px] bg-[#2b2b2b] p-[6px]">
          <ul className="min-h-0 flex-1 rounded-[5px] border border-[#4a4a4a] bg-[#585858] px-3 py-[6px] text-[13px]">
            <li className="flex h-[22px] items-center gap-1">
              <Svg w={15}>
                <circle cx="13" cy="3" r="2.200" fill="#fff" />
                <circle cx="9" cy="6" r="2" fill="#7fc0d0" />
                <circle cx="6" cy="11" r="2.200" fill="#7398a5" />
                <circle cx="3" cy="6" r="1.800" fill="#6d858c" />
                <circle cx="1.500" cy="2.500" r="1.200" fill="#6f7678" />
              </Svg>
              animation
            </li>
          </ul>
          <div className="mt-[7px] grid grid-cols-[1fr_130px_28px] items-center gap-x-[6px] gap-y-[7px] pr-px text-right text-[13px] leading-[22px]">
            <span>Скорость:</span>
            <ValueSlider label="Скорость" value="100" range={51} />
            <button type="button" aria-label="Сбросить скорость" className="flex h-[22px] items-center justify-center rounded-[4px] bg-[#686868]">
              <Svg w={13} h={12}><path d="M0 5l6-5v3c4 0 6 2 7 8-2-3-4-4-7-3.500V10z" fill="#ff9a2e" /></Svg>
            </button>
            <span>Смешанное:</span>
            <ValueSlider label="Смешанное" value="0.25" range={12} />
            <button type="button" aria-label="Повтор" className="flex h-[22px] items-center justify-center rounded-[4px] bg-[#2a85c0]">
              <Svg><path d="M5 2H2v9h4M9 12h3V3H8" stroke="#fff" strokeWidth="2" /><path d="M10 0v6L6.500 3zM4 8v6l3.500-3z" fill="#fff" /></Svg>
            </button>
          </div>
          <div className="mt-2 flex items-center justify-end gap-[6px] pr-px text-[13px] leading-[22px]">
            <span>Дорожка:</span>
            {[0, 1, 2, 3, 4].map((n) => (
              <button
                key={n}
                type="button"
                onClick={() => setTrack(n)}
                className={`h-[22px] w-[28px] rounded-[4px] ${track === n ? "bg-[#2a85c0]" : "bg-[#686868]"}`}
              >
                {n}
              </button>
            ))}
          </div>
        </div>
      </div>
    </section>
  );
}

export default function App() {
  return (
    <div className="flex h-screen flex-col overflow-hidden border-t border-l border-[#333] bg-[#4f4f4f] font-['Noto_Sans','Open_Sans',sans-serif] text-white [text-shadow:1px_1px_0_rgba(0,0,0,0.35)]">
      <TitleBar />
      <div className="flex min-h-0 flex-1 pr-[5px] pb-[5px] pl-1">
        <div className="flex min-w-0 flex-1 border-t border-l border-[#333]">
          <Viewport />
          <aside className="flex w-[649px] shrink-0 flex-col border-r border-b border-[#333]">
            <TreePanel />
            <PreviewPanel />
          </aside>
        </div>
      </div>
    </div>
  );
}
